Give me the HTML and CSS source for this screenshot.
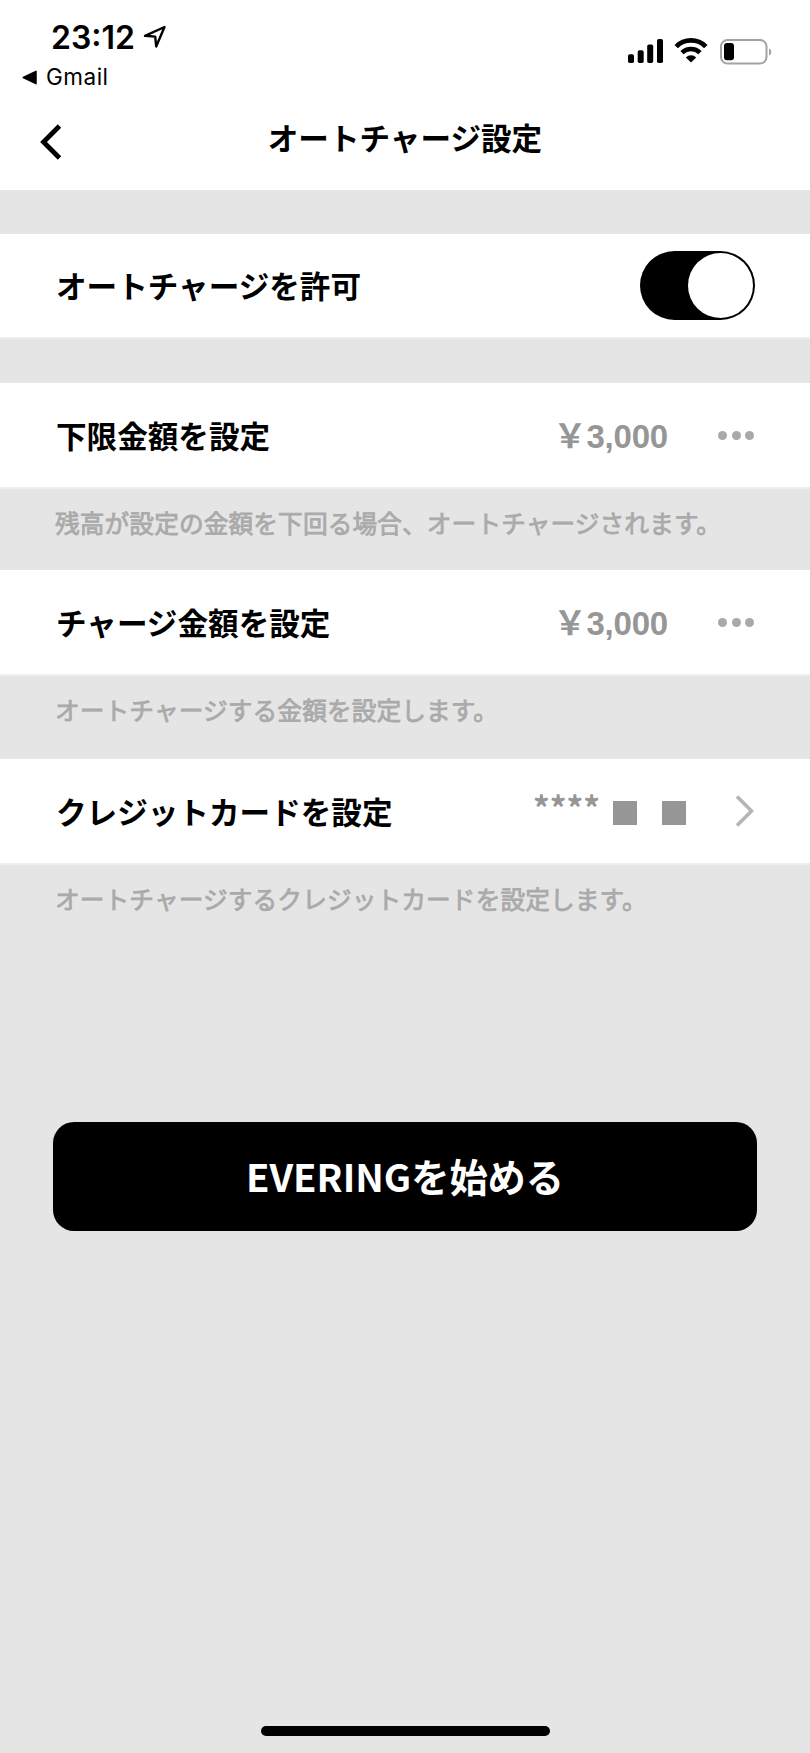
FILE: index.html
```html
<!DOCTYPE html>
<html lang="ja">
<head>
    <meta charset="UTF-8">
    <meta name="viewport" content="width=device-width, initial-scale=1.0">
    <title>オートチャージ設定</title>
    <link rel="stylesheet" href="styles.css">
</head>
<body>

<header class="header">
    <div class="status-bar">
        <div class="status-left">
            <div class="clock">
                <span class="time">23:12</span>
                <svg class="location" width="24" height="24" viewBox="0 0 24 24">
                    <path d="M2 10.8 L21.5 2 L13.2 21.5 L12.2 11.6 Z" fill="none" stroke="#000" stroke-width="2.4" stroke-linejoin="round"/>
                </svg>
            </div>
            <div class="back-app">
                <svg width="16" height="15" viewBox="0 0 16 15">
                    <path d="M1.3 7.5 L14 1.3 V13.7 Z" stroke="#000" stroke-width="1.5" stroke-linejoin="round"/>
                </svg>
                <span>Gmail</span>
            </div>
        </div>
        <div class="status-right">
            <svg width="36" height="24" viewBox="0 0 36 24">
                <rect x="0" y="15.3" width="6" height="8.7" rx="1.8"/>
                <rect x="9.7" y="11.3" width="6" height="12.7" rx="1.8"/>
                <rect x="19.2" y="5.5" width="6" height="18.5" rx="1.8"/>
                <rect x="29" y="0" width="6" height="24" rx="1.8"/>
            </svg>
            <svg class="wifi" width="34" height="25" viewBox="0 0 34 25">
                <path d="M2.2 8.6 A20.9 20.9 0 0 1 31.8 8.6" fill="none" stroke="#000" stroke-width="4.8"/>
                <path d="M8 14.7 A12.7 12.7 0 0 1 26 14.7" fill="none" stroke="#000" stroke-width="4.6"/>
                <path d="M11.8 19.4 A7.5 7.5 0 0 1 22.2 19.4 L17 24.6 Z"/>
            </svg>
            <svg class="battery" width="53" height="26" viewBox="0 0 53 26">
                <rect x="1" y="1" width="45.5" height="23.5" rx="6.5" fill="none" stroke="#a3a3a3" stroke-width="2"/>
                <rect x="4" y="4" width="10" height="17.3" rx="3"/>
                <path d="M49 9.2 A4.2 4.2 0 0 1 49 16.8 Z" fill="#a3a3a3"/>
            </svg>
        </div>
    </div>
    <div class="nav-bar">
        <svg class="back" width="24" height="36" viewBox="0 0 24 36">
            <path d="M21.5 2 L5.5 18 L21.5 34" fill="none" stroke="#000" stroke-width="4.8"/>
        </svg>
        <h1>オートチャージ設定</h1>
    </div>
</header>

<main>
    <div class="row row-toggle">
        <span class="label">オートチャージを許可</span>
        <div class="toggle"><div class="knob"></div></div>
    </div>

    <div class="row">
        <span class="label">下限金額を設定</span>
        <span class="value">￥3,000</span>
        <div class="dots"><i></i><i></i><i></i></div>
    </div>
    <p class="note">残高が設定の金額を下回る場合、オートチャージされます。</p>

    <div class="row">
        <span class="label">チャージ金額を設定</span>
        <span class="value">￥3,000</span>
        <div class="dots"><i></i><i></i><i></i></div>
    </div>
    <p class="note note-tall">オートチャージする金額を設定します。</p>

    <div class="row">
        <span class="label">クレジットカードを設定</span>
        <span class="stars">****</span>
        <span class="mask"></span>
        <span class="mask"></span>
        <svg class="arrow" width="20" height="32" viewBox="0 0 20 32">
            <path d="M2 1.5 L16.5 16 L2 30.5" fill="none" stroke="#b5b5b5" stroke-width="3.6"/>
        </svg>
    </div>
    <p class="note">オートチャージするクレジットカードを設定します。</p>

    <button type="button" class="start">EVERINGを始める</button>
</main>

<div class="home-bar"></div>

</body>
</html>
```
FILE: styles.css
```css
* {
    box-sizing: border-box;
}

body {
    margin: 0;
    height: 1753px;
    display: flex;
    flex-direction: column;
    align-items: stretch;
    background-color: #e5e5e5;
    color: #000;
    font-family: "Noto Sans CJK JP", sans-serif;
    overflow: hidden;
}

svg {
    display: block;
    flex-shrink: 0;
}

.header {
    height: 190px;
    background-color: #fff;
}

.status-bar {
    height: 96px;
    display: flex;
    justify-content: space-between;
    padding: 0 37px 0 22px;
    font-family: Inter, sans-serif;
}

.clock {
    display: flex;
    padding: 18px 0 0 29px;
}

.time {
    font-size: 32px;
    line-height: 40px;
    font-weight: 600;
}

.location {
    margin: 7px 0 0 8px;
}

.back-app {
    display: flex;
    align-items: center;
    gap: 8px;
    margin-top: 5px;
    font-size: 22.5px;
    line-height: 28px;
    letter-spacing: 0.5px;
}

.status-right {
    display: flex;
    align-items: flex-start;
    padding-top: 39px;
}

.wifi {
    margin: -1px 0 0 10px;
}

.battery {
    margin-left: 12px;
}

.nav-bar {
    height: 94px;
    display: flex;
    padding: 0 38px;
}

.back {
    margin-top: 28px;
}

h1 {
    flex: 1;
    margin: 19px 24px 0 0;
    font-size: 30.6px;
    line-height: 44px;
    font-weight: bold;
    text-align: center;
}

.row {
    height: 106px;
    display: flex;
    align-items: center;
    padding: 0 55px 0 56px;
    background-color: #fff;
    border-bottom: 2px solid #eee;
}

.row-toggle {
    height: 105px;
    margin: 44px 0;
}

.label {
    flex: 1;
    padding-bottom: 1px;
    font-size: 30.6px;
    line-height: 44px;
    font-weight: bold;
}

.toggle {
    width: 115px;
    height: 69px;
    padding: 2px;
    display: flex;
    justify-content: flex-end;
    border-radius: 35px;
    background-color: #000;
}

.knob {
    width: 65px;
    height: 65px;
    border-radius: 50%;
    background-color: #fff;
}

.value {
    padding-top: 4px;
    font-family: "Liberation Sans", "Noto Sans CJK JP", sans-serif;
    font-size: 33px;
    line-height: 44px;
    font-weight: bold;
    letter-spacing: -0.2px;
    color: #969696;
}

.dots {
    display: flex;
    gap: 4.5px;
    margin: 0 1px 0 50px;
}

.dots i {
    width: 9px;
    height: 9px;
    border-radius: 50%;
    background-color: #a9a9a9;
}

.note {
    height: 81px;
    margin: 0;
    padding: 15px 40px 0 55px;
    font-size: 24.7px;
    line-height: 36px;
    letter-spacing: 0.1px;
    color: #aaa;
    -webkit-text-stroke: 0.8px #aaa;
}

.note-tall {
    height: 83px;
}

.stars {
    padding-bottom: 8px;
    font-size: 33px;
    line-height: 44px;
    font-weight: bold;
    color: #969696;
}

.mask {
    width: 24px;
    height: 24px;
    margin: 4px 0 0 13px;
    background-color: #969696;
}

.mask + .mask {
    margin-left: 25px;
}

.arrow {
    margin-left: 49px;
}

.start {
    display: block;
    width: 704px;
    height: 109px;
    margin: 176px auto 0;
    padding: 0 0 3px;
    border: none;
    border-radius: 21px;
    background-color: #000;
    color: #fff;
    font-family: inherit;
    font-size: 38.2px;
    font-weight: bold;
}

.home-bar {
    width: 289px;
    height: 10px;
    margin: auto auto 17px;
    border-radius: 5px;
    background-color: #000;
}
```
